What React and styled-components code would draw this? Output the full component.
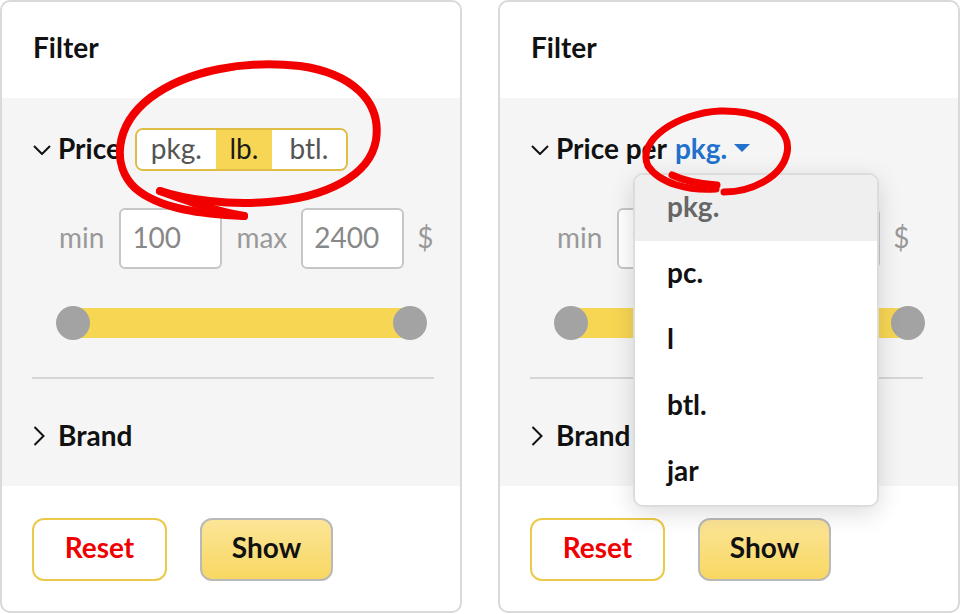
import React from "react";
import styled, { createGlobalStyle } from "styled-components";

const GlobalStyle = createGlobalStyle`
  html, body { margin: 0; padding: 0; background: #fff; }
  body { font-family: Lato, "Noto Sans", "DejaVu Sans", sans-serif; }
  * { box-sizing: border-box; }
`;

const Page = styled.div`
  position: relative;
  width: 960px;
  height: 614px;
  display: flex;
  gap: 36px;
`;

const Panel = styled.div`
  position: relative;
  width: 462px;
  height: 613px;
  border: 2px solid #d9d9d9;
  border-radius: 10px;
  background: #fff;
  display: flex;
  flex-direction: column;
`;

const Header = styled.div`
  height: 96px;
  flex: none;
  display: flex;
  align-items: center;
  padding: 0 0 6px 31px;
  font-size: 28px;
  font-weight: 700;
  color: #111;
`;

const Section = styled.div`
  height: 388px;
  flex: none;
  background: #f5f5f5;
  padding: 30px 26px 0 30px;
  display: flex;
  flex-direction: column;
`;

const Row = styled.div`
  position: relative;
  height: ${(p) => p.$h || 43}px;
  margin-top: ${(p) => p.$mt || 0}px;
  display: flex;
  align-items: center;
  flex: none;
  line-height: 1;
`;

const Toggle = styled.span`
  width: 26px;
  flex: none;
  display: flex;
  align-items: center;
  padding-left: 1px;
`;

const Title = styled.span`
  font-size: 28px;
  font-weight: 700;
  color: #111;
  white-space: nowrap;
  padding-bottom: 3px;
`;

const Segmented = styled.div`
  margin-left: 14px;
  height: 43px;
  display: flex;
  border: 2px solid #dfbd45;
  border-radius: 8px;
  overflow: hidden;
  background: #fff;
`;

const Segment = styled.span`
  width: ${(p) => p.$w}px;
  display: flex;
  align-items: center;
  justify-content: center;
  padding-bottom: 3px;
  font-size: 28px;
  color: ${(p) => (p.$active ? "#1a1a1a" : "#555")};
  background: ${(p) => (p.$active ? "#f8d655" : "#fff")};
`;

const InputRow = styled.div`
  margin-top: 37px;
  height: 61px;
  padding-left: 27px;
  display: flex;
  align-items: center;
  flex: none;
  line-height: 1;
`;

const Label = styled.span`
  font-size: 28px;
  color: #999;
  padding-bottom: 3px;
  margin-right: ${(p) => p.$mr || 0}px;
`;

const NumberBox = styled.div`
  width: ${(p) => p.$w}px;
  height: 61px;
  border: 2px solid #c6c6c6;
  border-radius: 6px;
  background: #fff;
  display: flex;
  align-items: center;
  padding: 0 0 3px 11px;
  font-size: 28px;
  color: #888;
  margin-right: ${(p) => p.$mr || 0}px;
`;

const Slider = styled.div`
  position: relative;
  margin: 37px 0 0 24px;
  width: 371px;
  height: 34px;
  display: flex;
  justify-content: space-between;
  align-items: center;
  flex: none;
  &::before {
    content: "";
    position: absolute;
    left: 17px;
    right: 17px;
    top: 2px;
    bottom: 2px;
    background: #f7d653;
  }
`;

const Thumb = styled.span`
  position: relative;
  width: 34px;
  height: 34px;
  border-radius: 50%;
  background: #a3a3a3;
`;

const Divider = styled.div`
  margin-top: 37px;
  height: 2px;
  width: ${(p) => p.$w}px;
  background: #d6d6d6;
  flex: none;
`;

const Footer = styled.div`
  flex: 1;
  padding: 32px 0 0 30px;
  display: flex;
  gap: 33px;
  align-items: flex-start;
`;

const Button = styled.button`
  width: ${(p) => p.$w}px;
  height: 63px;
  border-radius: 12px;
  font-family: inherit;
  font-size: 28px;
  font-weight: 700;
  line-height: 1;
  padding: 0 0 5px;
  border: 2px solid ${(p) => (p.$primary ? "#b9b9b9" : "#ecc94b")};
  color: ${(p) => (p.$primary ? "#111" : "#f00000")};
  background: ${(p) =>
    p.$primary ? "linear-gradient(#fce597, #f8d762)" : "#fff"};
`;

const Select = styled.span`
  margin-left: 8px;
  display: inline-flex;
  align-items: center;
  gap: 7px;
  font-size: 28px;
  font-weight: 700;
  color: #2171cd;
  padding-bottom: 3px;
`;

const Menu = styled.div`
  position: absolute;
  z-index: 5;
  left: 103px;
  top: calc(100% + 2px);
  width: 246px;
  border: 2px solid #dcdcdc;
  border-radius: 10px;
  background: #fff;
  overflow: hidden;
  box-shadow: 0 6px 24px rgba(0, 0, 0, 0.14);
`;

const MenuItem = styled.div`
  height: 66px;
  display: flex;
  align-items: center;
  padding: 0 0 4px 32px;
  font-size: 28px;
  font-weight: 700;
  color: ${(p) => (p.$active ? "#666" : "#111")};
  background: ${(p) => (p.$active ? "#efefef" : "#fff")};
`;

const Annotation = styled.svg`
  position: absolute;
  left: 0;
  top: 0;
  z-index: 10;
  pointer-events: none;
`;

const ChevronDown = () => (
  <svg width="18" height="10" viewBox="0 0 18 10">
    <polyline points="1,1 9,9 17,1" fill="none" stroke="#111" strokeWidth="2" />
  </svg>
);

const ChevronRight = () => (
  <svg width="12" height="20" viewBox="0 0 12 20">
    <polyline points="1.5,1 10.5,10 1.5,19" fill="none" stroke="#111" strokeWidth="2" />
  </svg>
);

const Caret = () => (
  <svg width="16" height="8" viewBox="0 0 16 8">
    <polygon points="0,0 16,0 8,8" fill="#2171cd" />
  </svg>
);

const PriceInputs = ({ boxW }) => (
  <InputRow>
    <Label $mr={15}>min</Label>
    <NumberBox $w={boxW} $mr={14}>100</NumberBox>
    <Label $mr={14}>max</Label>
    <NumberBox $w={boxW} $mr={13}>2400</NumberBox>
    <Label>$</Label>
  </InputRow>
);

const Rest = ({ lineW }) => (
  <>
    <Slider>
      <Thumb />
      <Thumb />
    </Slider>
    <Divider $w={lineW} />
    <Row $h={50} $mt={32}>
      <Toggle>
        <ChevronRight />
      </Toggle>
      <Title>Brand</Title>
    </Row>
  </>
);

const Buttons = () => (
  <Footer>
    <Button $w={135}>Reset</Button>
    <Button $w={133} $primary>
      Show
    </Button>
  </Footer>
);

const units = ["pkg.", "pc.", "l", "btl.", "jar"];

export default function App() {
  return (
    <>
      <GlobalStyle />
      <Page>
        <Panel>
          <Header>Filter</Header>
          <Section>
            <Row>
              <Toggle>
                <ChevronDown />
              </Toggle>
              <Title>Price</Title>
              <Segmented>
                <Segment $w={79}>pkg.</Segment>
                <Segment $w={56} $active>
                  lb.
                </Segment>
                <Segment $w={74}>btl.</Segment>
              </Segmented>
            </Row>
            <PriceInputs boxW={103} />
            <Rest lineW={402} />
          </Section>
          <Buttons />
        </Panel>
        <Panel>
          <Header>Filter</Header>
          <Section>
            <Row>
              <Toggle>
                <ChevronDown />
              </Toggle>
              <Title>Price per</Title>
              <Select>
                pkg.
                <Caret />
              </Select>
              <Menu>
                {units.map((u, i) => (
                  <MenuItem key={u} $active={i === 0}>
                    {u}
                  </MenuItem>
                ))}
              </Menu>
            </Row>
            <PriceInputs boxW={92} />
            <Rest lineW={393} />
          </Section>
          <Buttons />
        </Panel>
        <Annotation width="960" height="614" viewBox="0 0 960 614">
          <g fill="none" stroke="#f20000" strokeLinecap="round" strokeLinejoin="round">
            <path
              strokeWidth="8"
              d="M 244 216 C 205 214, 160 210, 135 188 C 112 166, 114 126, 150 98 C 187 70, 245 60, 300 66 C 350 73, 382 100, 376 140 C 370 176, 325 198, 268 202 C 228 205, 188 200, 160 191"
            />
            <path strokeWidth="8" d="M 160 191 C 190 202, 215 211, 244 216" />
            <path
              strokeWidth="7"
              d="M 716 189 C 690 191, 660 184, 648 166 C 636 140, 678 113, 720 111 C 762 110, 792 128, 787 153 C 782 177, 752 192, 724 192"
            />
            <path strokeWidth="7" d="M 672 175 C 686 182, 700 184, 717 185" />
          </g>
        </Annotation>
      </Page>
    </>
  );
}
